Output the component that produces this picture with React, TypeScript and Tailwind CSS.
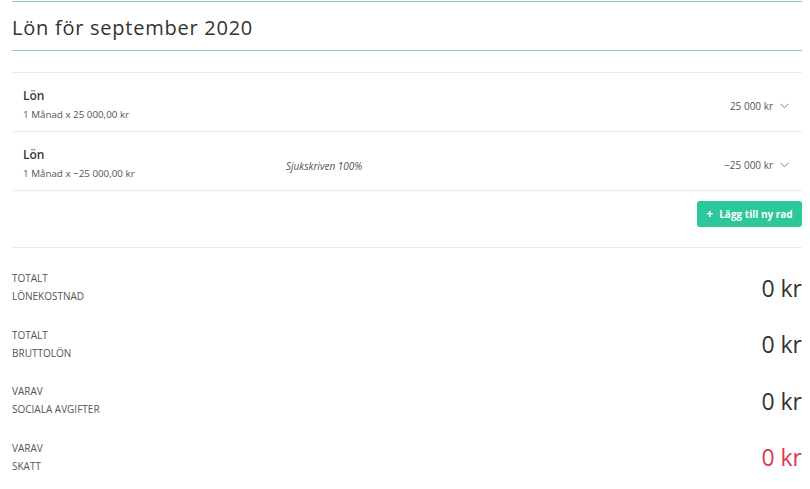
import React from "react";

function Chevron() {
  return (
    <svg width="9" height="6" viewBox="0 0 9 6" className="ml-[7px]" fill="none">
      <path d="M0.5 0.8 L4.5 4.8 L8.5 0.8" stroke="#777" strokeWidth="0.9" />
    </svg>
  );
}

function Row({ sub, amount, note }: { sub: string; amount: string; note?: string }) {
  return (
    <div className="h-[59px] border-b border-[#ececec] flex items-center pl-[11px] pr-[13px] pt-[6px]">
      <div className="w-[250px] flex flex-col">
        <div className="text-[12px] font-semibold text-[#3a3a3a] leading-[18px]">Lön</div>
        <div className="text-[9.8px] text-[#555] leading-[16px] mt-[2px]">{sub}</div>
      </div>
      <div className="flex-1 text-[10px] italic text-[#555] pl-[13px] pt-[4px]">{note}</div>
      <div className="flex items-center text-[10px] text-[#555] pt-[2px]">
        {amount}
        <Chevron />
      </div>
    </div>
  );
}

function Total({ a, b, red }: { a: string; b: string; red?: boolean }) {
  return (
    <div className="h-[56.5px] flex items-center justify-between">
      <div className="text-[10px] text-[#555] leading-[18px] uppercase">
        <div>{a}</div>
        <div>{b}</div>
      </div>
      <div className={`text-[23px] leading-none pt-[2px] ${red ? "text-[#e2394f]" : "text-[#333]"}`}>0 kr</div>
    </div>
  );
}

export default function App() {
  return (
    <div className="w-[810px] h-[489px] bg-white overflow-hidden" style={{ fontFamily: '"Open Sans", sans-serif' }}>
      <div className="ml-[12px] w-[790px]">
        <div className="mt-[1px] h-[1px] bg-[#7fd3be]" />
        <div className="h-[48px] flex items-center pt-[4px] text-[20px] tracking-[0.75px] text-[#333]">Lön för september 2020</div>
        <div className="h-[1px] bg-[#7fd3be]" />
        <div className="h-[21px]" />
        <div className="border-t border-[#ececec]">
          <Row sub="1 Månad x 25 000,00 kr" amount="25 000 kr" />
          <Row sub="1 Månad x −25 000,00 kr" amount="−25 000 kr" note="Sjukskriven 100%" />
        </div>
        <div className="flex justify-end pt-[10px] pb-[20px] border-b border-[#ececec]">
          <button className="h-[26px] w-[105px] rounded-[3px] bg-[#2cc89c] text-white text-[10px] font-bold flex items-center justify-center gap-[6px]">
            <span className="text-[12px] leading-none">+</span>
            <span>Lägg till ny rad</span>
          </button>
        </div>
        <div className="pt-[11px]">
          <Total a="TOTALT" b="LÖNEKOSTNAD" />
          <Total a="TOTALT" b="BRUTTOLÖN" />
          <Total a="VARAV" b="SOCIALA AVGIFTER" />
          <Total a="VARAV" b="SKATT" red />
        </div>
      </div>
    </div>
  );
}
